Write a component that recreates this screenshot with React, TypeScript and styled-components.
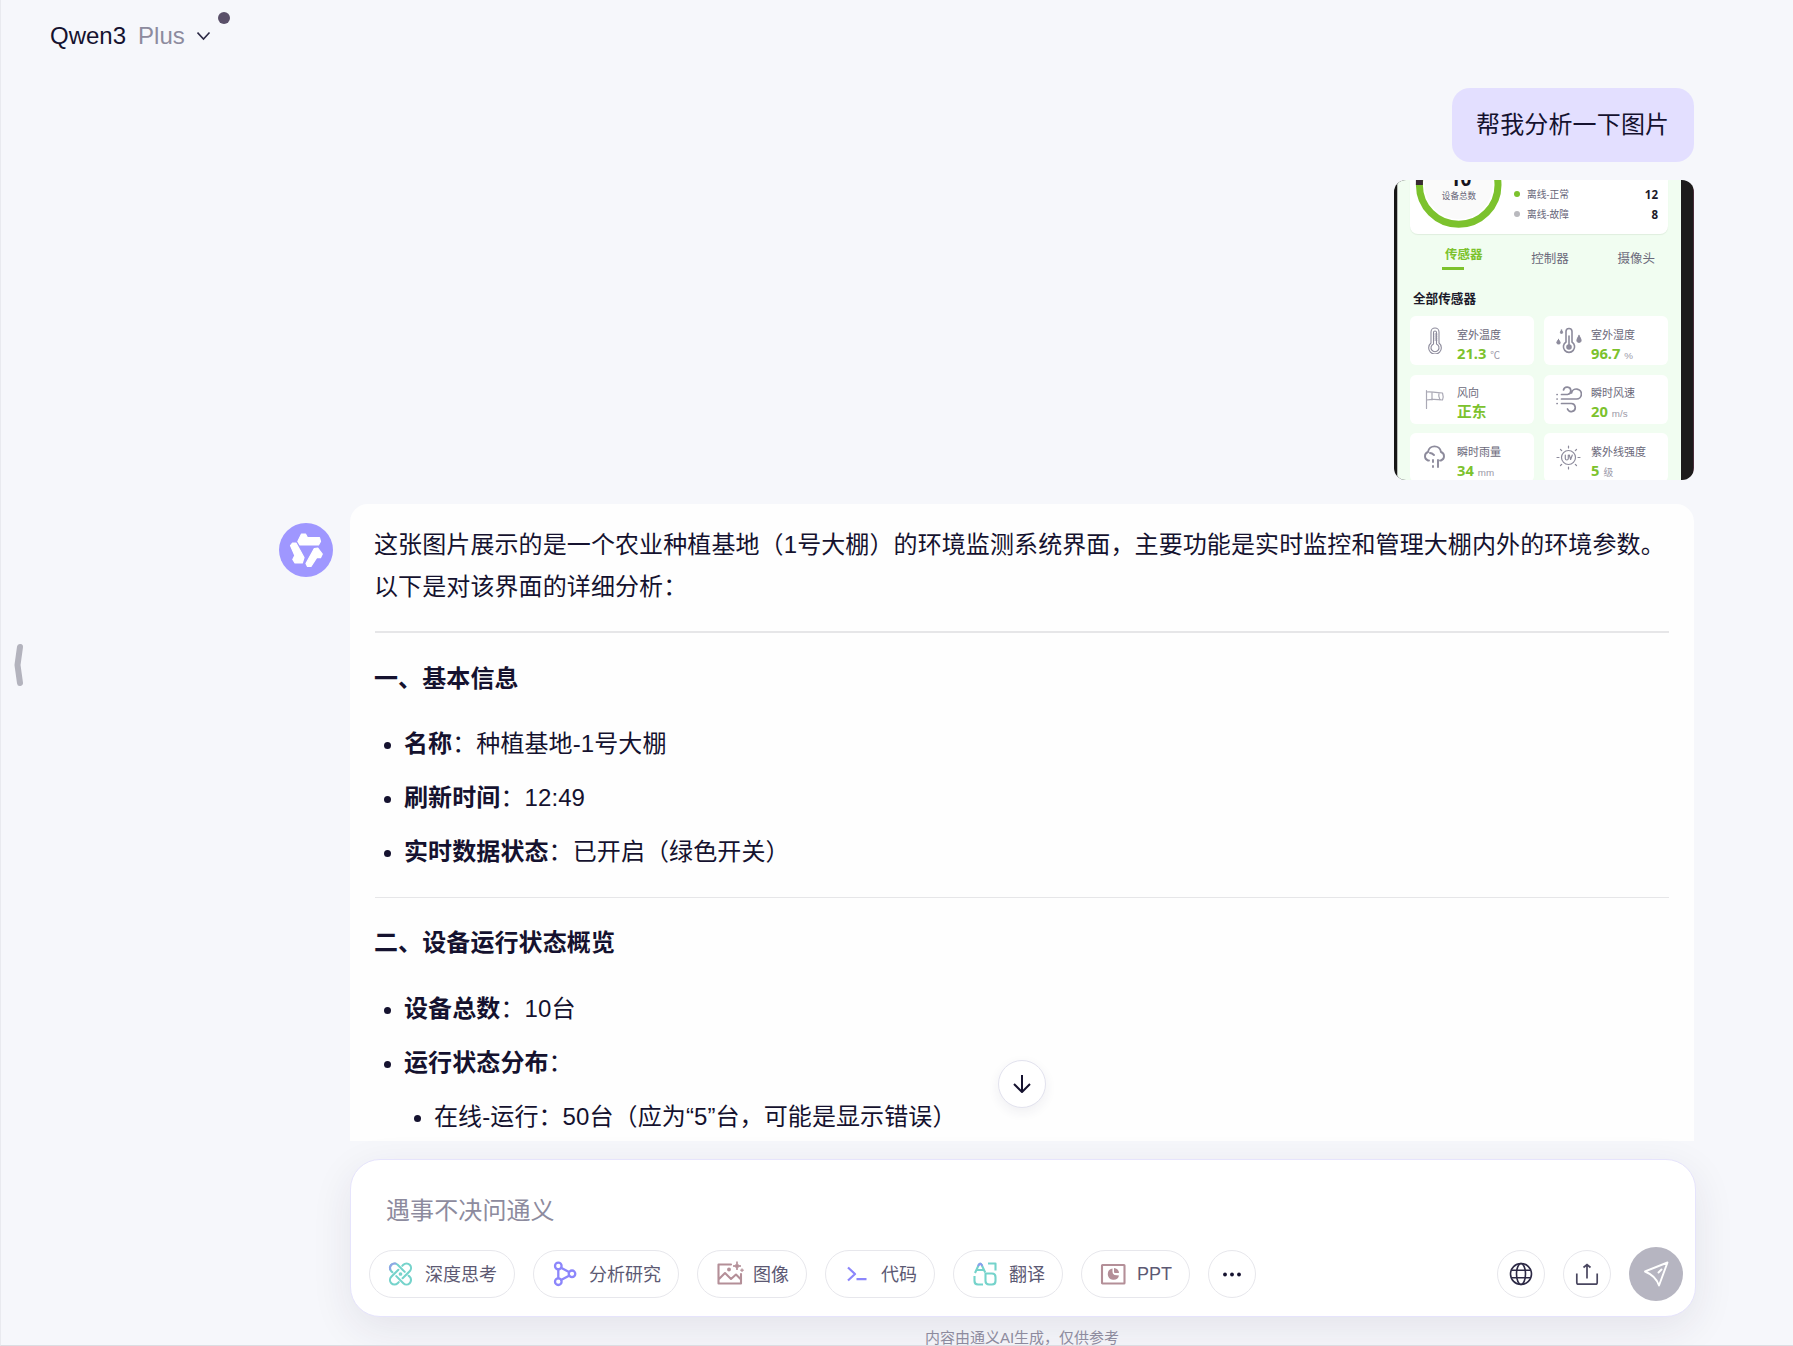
import React from "react";
import styled, { createGlobalStyle } from "styled-components";

const GlobalStyle = createGlobalStyle`
  *, *::before, *::after { box-sizing: border-box; }
  body {
    margin: 0;
    background: #f6f7fb;
    font-family: "Liberation Sans", "Noto Sans CJK SC", sans-serif;
    color: #15122f;
  }
`;

const Page = styled.div`
  position: relative;
  display: flex;
  flex-direction: column;
  width: 100%;
  height: 1346px;
  overflow: hidden;
  border-left: 1px solid #e9eaef;
  border-bottom: 1px solid #dcdde2;
`;

const Header = styled.header`
  display: flex;
  align-items: center;
  height: 72px;
  flex: none;
  padding-left: 49px;
  font-size: 24px;
`;

const Model = styled.span`
  position: relative;
  display: inline-flex;
  align-items: center;
  gap: 12px;
`;

const Muted = styled.span`
  color: #8d8b9e;
`;

const Dot = styled.i`
  position: absolute;
  right: -19px;
  top: -10px;
  width: 12px;
  height: 12px;
  border-radius: 50%;
  background: #5a5069;
`;

const Thread = styled.main`
  display: flex;
  flex-direction: column;
  height: 1069px;
  flex: none;
  overflow: hidden;
  padding: 16px 99px 0 278px;
`;

const UserTurn = styled.section`
  display: flex;
  flex-direction: column;
  align-items: flex-end;
  gap: 18px;
  margin-bottom: 24px;
`;

const Bubble = styled.div`
  width: 242px;
  height: 74px;
  padding-left: 24px;
  border-radius: 18px;
  background: #e3dfff;
  font-size: 24px;
  line-height: 74px;
  letter-spacing: 0.15px;
  white-space: nowrap;
`;

const Photo = styled.div`
  display: flex;
  width: 300px;
  height: 300px;
  padding: 0 13px 0 3px;
  border-radius: 12px;
  overflow: hidden;
  background: linear-gradient(90deg, #161616 0 50%, #1d1b1b 50% 99.6%, #4a2c3a 99.6%);
`;

const Screen = styled.div`
  flex: 1;
  display: flex;
  flex-direction: column;
  padding: 0 13px 0 12px;
  border-left: 1px solid #b9bdb9;
  background: #f1fdf1;
  border-radius: 5px 0 0 5px;
`;

const Summary = styled.div`
  display: flex;
  height: 54px;
  flex: none;
  border-radius: 0 0 8px 8px;
  background: #fff;
  box-shadow: 0 1px 1px #dfeede;
`;

const Gauge = styled.div`
  position: relative;
  width: 98px;
  flex: none;
  margin-right: 6px;
  svg { display: block; }
`;

const GaugeLabel = styled.div`
  position: absolute;
  inset: -12px 0 auto 0;
  display: flex;
  flex-direction: column;
  align-items: center;
  font-size: 8.6px;
  line-height: 12px;
  color: #666477;
  b {
    font: 700 19px/22px "Noto Sans", sans-serif;
    color: #161420;
    margin-left: 3px;
  }
`;

const Legend = styled.div`
  flex: 1;
  display: flex;
  flex-direction: column;
  padding: 4px 10px 0 0;
`;

const LegendRow = styled.div<{ $dot: string }>`
  display: flex;
  align-items: center;
  height: 20px;
  font-size: 9.7px;
  color: #666477;
  &::before {
    content: "";
    width: 6px;
    height: 6px;
    margin-right: 7px;
    border-radius: 50%;
    background: ${(p) => p.$dot};
  }
  b {
    margin-left: auto;
    font: 700 11.500px "Noto Sans", sans-serif;
    color: #1c1a2a;
  }
`;

const Tabs = styled.div`
  display: flex;
  justify-content: space-between;
  height: 53px;
  flex: none;
  padding: 12px 13px 0 35px;
`;

const Tab = styled.span<{ $active?: boolean }>`
  height: 24px;
  font-size: 12.5px;
  line-height: 18px;
  white-space: nowrap;
  padding-top: ${(p) => (p.$active ? 0 : 3.5)}px;
  font-weight: ${(p) => (p.$active ? 700 : 400)};
  color: ${(p) => (p.$active ? "#7cc22d" : "#6b697a")};
  &::after {
    content: "";
    display: ${(p) => (p.$active ? "block" : "none")};
    width: 22px;
    height: 3px;
    margin: 3px 0 0 -3px;
    background: #7cc22d;
  }
`;

const PhotoTitle = styled.div`
  height: 29px;
  flex: none;
  padding: 3px 0 0 3px;
  font-size: 12.6px;
  line-height: 18px;
  font-weight: 700;
  color: #1c1a2a;
`;

const Grid = styled.div`
  display: grid;
  grid-template-columns: 124px 124px;
  grid-auto-rows: 49px;
  gap: 9.600px 10px;
`;

const Sensor = styled.div`
  display: flex;
  align-items: center;
  gap: 9px;
  padding-left: 11px;
  border-radius: 6px;
  background: #fff;
  > svg { flex: none; }
`;

const Reading = styled.div`
  display: flex;
  flex-direction: column;
  padding-top: 7px;
  font-size: 11px;
  line-height: 17px;
  color: #6b697a;
  white-space: nowrap;
`;

const Value = styled.div`
  display: flex;
  align-items: baseline;
  gap: 4px;
  height: 18px;
  font-size: 9.800px;
  line-height: 18px;
  color: #9b99a8;
  b {
    font: 700 14.700px/18px "Noto Sans", "Noto Sans CJK SC", sans-serif;
    color: #7cc22d;
  }
`;

const BotTurn = styled.section`
  display: flex;
  align-items: flex-start;
  gap: 17px;
  height: 637px;
  flex: none;
`;

const Avatar = styled.div`
  width: 54px;
  height: 54px;
  margin-top: 19px;
  flex: none;
  svg { display: block; }
`;

const Answer = styled.article`
  flex: 1;
  height: 637px;
  padding: 20px 25px 0 24px;
  border-radius: 18px 18px 0 0;
  background: #fefefe;
  font-size: 24px;
  line-height: 42px;
  letter-spacing: 0.1px;
  white-space: nowrap;
`;

const Paragraph = styled.p`
  margin: 0;
`;

const Rule = styled.hr<{ $thick?: boolean }>`
  height: ${(p) => (p.$thick ? 2 : 1)}px;
  margin: ${(p) => (p.$thick ? "23px 0 25px 1px" : "24px 0 24px 1px")};
  border: 0;
  background: #e6e6e8;
`;

const Heading = styled.h3<{ $gap: number }>`
  margin: 0 0 ${(p) => p.$gap}px;
  font-size: 24px;
  font-weight: 700;
`;

const List = styled.ul`
  display: flex;
  flex-direction: column;
  gap: 12px;
  margin: 0;
  padding: 0;
  list-style: none;
`;

const Item = styled.li<{ $level?: number }>`
  display: flex;
  align-items: center;
  height: 42px;
  padding-left: ${(p) => 10 + (p.$level ?? 0) * 30}px;
  &::before {
    content: "";
    width: 7px;
    height: 7px;
    margin: 3px 13px 0 0;
    border-radius: 50%;
    background: #15122f;
  }
`;

const ScrollDown = styled.button`
  position: absolute;
  left: 997px;
  top: 1060px;
  display: grid;
  place-items: center;
  width: 48px;
  height: 48px;
  padding: 0;
  border: 1px solid #e2e2ee;
  border-radius: 50%;
  background: #fff;
  box-shadow: 0 4px 12px rgba(40, 36, 90, 0.07);
`;

const Handle = styled.div`
  position: absolute;
  left: 12px;
  top: 643px;
  svg { display: block; }
`;

const Composer = styled.form`
  display: flex;
  flex-direction: column;
  justify-content: space-between;
  width: 1346px;
  height: 158px;
  flex: none;
  margin: 18px 0 0 349px;
  padding: 30px 12px 15px 18px;
  border: 1px solid #e6e4fc;
  border-radius: 30px;
  background: #fff;
  box-shadow: 0 12px 42px rgba(40, 36, 70, 0.09);
`;

const Placeholder = styled.div`
  height: 42px;
  padding-left: 17px;
  font-size: 24px;
  line-height: 42px;
  letter-spacing: 0.1px;
  color: #8d8b9e;
`;

const Tools = styled.div`
  display: flex;
  align-items: center;
  gap: 18px;
`;

const Chip = styled.button`
  display: flex;
  align-items: center;
  gap: 12px;
  height: 48px;
  padding: 0 17px 0 19px;
  border: 1px solid #e7e7ec;
  border-radius: 24px;
  background: #fff;
  font: 18px "Liberation Sans", "Noto Sans CJK SC", sans-serif;
  color: #5c5973;
  white-space: nowrap;
  svg { flex: none; overflow: visible; }
`;

const ChipLabel = styled.span<{ $lift: number }>`
  padding-bottom: ${(p) => p.$lift}px;
`;

const RoundButton = styled.button<{ $push?: boolean }>`
  display: grid;
  place-items: center;
  width: 48px;
  height: 48px;
  margin-left: ${(p) => (p.$push ? "auto" : "0")};
  padding: 0;
  border: 1px solid #e7e7ec;
  border-radius: 50%;
  background: #fff;
`;

const SendButton = styled(RoundButton)`
  width: 54px;
  height: 54px;
  border: 0;
  background: #b6b5c1;
`;

const Footnote = styled.footer`
  padding-top: 9px;
  padding-left: 250px;
  text-align: center;
  font-size: 15px;
  line-height: 24px;
  color: #8d8b9e;
`;

const gray = { fill: "none", stroke: "#8d8b9c", strokeLinecap: "round", strokeLinejoin: "round" } as const;

const icons = {
  thermometer: (
    <svg width="27" height="27" viewBox="0 0 27 27" {...gray} strokeWidth="1.1">
      <path d="M10 16V5a4 4 0 0 1 8 0v11a6.300 6.300 0 1 1-8 0z" />
      <path d="M12.500 17V5.500a1.500 1.500 0 0 1 3 0V17a4 4 0 1 1-3 0zM14 7h2M14 9h2M14 11h2M14 13h2" />
    </svg>
  ),
  humidity: (
    <svg width="27" height="27" viewBox="0 0 27 27" {...gray} strokeWidth="1.6">
      <path d="M11 15V4.500a3 3 0 0 1 6 0V15a5.600 5.600 0 1 1-6 0z" />
      <path d="M14 9v10" />
      <circle cx="14" cy="20" r="2" fill="#8d8b9c" />
      <path d="M3.500 12.500c3 4 1.500 4.500 0 4.500s-3-1 0-4.500zM6.500 3c2 3 1 3.500 0 3.500s-2-.5 0-3.500zM24 8.500c4 6 1.500 7 0 7s-4-1 0-7z" fill="#8d8b9c" strokeWidth="1" />
    </svg>
  ),
  flag: (
    <svg width="27" height="27" viewBox="0 0 27 27" {...gray} stroke="#aaa9b5" strokeWidth="1.2">
      <path d="M5.500 4.500v18M5.500 6c5-1 7 1 16 1 1 3 1 5 0 7-8-1-10-1-16 0M11 6v8M18 7c-1 3 0 5 1 7" />
    </svg>
  ),
  wind: (
    <svg width="27" height="27" viewBox="0 0 27 27" {...gray} strokeWidth="1.7">
      <path d="M6.500 8.500h6a3.700 3.700 0 1 0-4-4.500M6.500 13H21.500a5 5 0 1 0-5-6M6.500 17.500H16a4 4 0 1 1-3.500 5.500M2 8.500h.2M2 13h.2M2 17.500h.2" />
    </svg>
  ),
  rain: (
    <svg width="27" height="27" viewBox="0 0 27 27" {...gray} strokeWidth="1.9">
      <path d="M8 16.500H7a4.500 4.500 0 0 1 0-8.500C8 .5 19 .5 20 8a4.500 4.500 0 0 1 0 8.500h-1M9 9c2 0 3 1 4 2M12 16v2M12 22v1M17 16v7" />
    </svg>
  ),
  uv: (
    <svg width="27" height="27" viewBox="0 0 27 27" {...gray} strokeWidth="1.2">
      <circle cx="13.500" cy="13.500" r="7" />
      <path d="M13.500 2v2M13.500 23v2M2 13.500h2M23 13.500h2M5.500 5.500l1.200 1.200M20.300 20.300l1.200 1.200M5.500 21.500l1.200-1.200M20.300 6.700l1.200-1.200M10.300 11v3.500a1.500 1.500 0 0 0 3 0V11M14.300 11l1.300 4.500 1.700-4.500" />
    </svg>
  ),
};

const sensors = [
  { icon: icons.thermometer, label: "室外温度", value: "21.3", unit: "℃" },
  { icon: icons.humidity, label: "室外湿度", value: "96.7", unit: "%" },
  { icon: icons.flag, label: "风向", value: "正东", unit: "" },
  { icon: icons.wind, label: "瞬时风速", value: "20", unit: "m/s" },
  { icon: icons.rain, label: "瞬时雨量", value: "34", unit: "mm" },
  { icon: icons.uv, label: "紫外线强度", value: "5", unit: "级" },
];

const stroke = { fill: "none", strokeLinecap: "round", strokeLinejoin: "round", strokeWidth: 2.1 } as const;

const link = "M1.500 -4.500H-8.500A4.500 4.500 0 0 0 -8.500 4.500H-7M-1.500 4.500H8.500A4.500 4.500 0 0 0 8.500 -4.500H7";

const chips = [
  {
    label: "深度思考",
    icon: (
      <svg width="24" height="24" viewBox="0 0 24 24" {...stroke} stroke="#75d3cb">
        <path d={link} transform="translate(11.500 12) rotate(45)" />
        <path d={link} transform="translate(11.500 12) rotate(135)" />
        <path d="M1.100 7.500C.2 4 3 1 6.500 1.500" stroke="#8fa6e6" />
        <circle cx="11.500" cy="12" r=".8" fill="#75d3cb" />
      </svg>
    ),
  },
  {
    label: "分析研究",
    icon: (
      <svg width="24" height="24" viewBox="0 0 24 24" {...stroke} stroke="#8c86fb" strokeWidth="2.300">
        <circle cx="5.300" cy="4" r="3.300" />
        <circle cx="5.300" cy="19.700" r="3.300" />
        <circle cx="19" cy="11.800" r="3.300" />
        <path d="M5.300 7.500v8.700M8.500 6l7.500 4M8.500 17.800l7.500-4" />
      </svg>
    ),
  },
  {
    label: "图像",
    icon: (
      <svg width="24" height="24" viewBox="0 0 24 24" {...stroke} stroke="#b48f98">
        <path d="M14 2.500H1.500v19h22.500V12M2 17l6-6 6 6 5-4.500 5 5" />
        <circle cx="12" cy="7.500" r=".9" fill="#b48f98" />
        <path d="M20 0c.5 3 1 3.500 4 4-3 .5-3.500 1-4 4-.5-3-1-3.500-4-4 3-.5 3.500-1 4-4z" fill="#b48f98" strokeWidth="1" />
        <path d="M25 6.800v2.700M23.700 8.200h2.600" strokeWidth="1.200" />
      </svg>
    ),
  },
  {
    label: "代码",
    icon: (
      <svg width="24" height="24" viewBox="0 0 24 24" {...stroke} strokeLinecap="butt" stroke="#8c86fb" strokeWidth="2.200">
        <path d="M3 5.500 10 12l-7 6.500M11.500 17.200h10" />
      </svg>
    ),
  },
  {
    label: "翻译",
    icon: (
      <svg width="24" height="24" viewBox="0 0 24 24" {...stroke} stroke="#75d3cb">
        <path d="M2 11 5.800 2.700Q7.200 .5 8.600 2.700l3.600 7.800M4 8h7M15 1.500h7.500v7M1.500 14v5q0 3.500 3.500 3.500h5" strokeLinecap="butt" />
        <path d="M12.500 11.500H19q3.500 0 3.500 3.500v4q0 3.500-3.500 3.500h-3q-3.500 0-3.500-3.500z" />
        <path d="M5.500 3.300Q7.200 .4 8.900 3.200" stroke="#8b9bf0" />
      </svg>
    ),
  },
  {
    label: "PPT",
    icon: (
      <svg width="24" height="24" viewBox="0 0 24 24" {...stroke} stroke="#b48f98">
        <rect x="1" y="3" width="22.500" height="18.500" rx=".5" />
        <path d="M11.500 6.500a5.700 5.700 0 1 0 6.500 7l-4.500-.5q-2-1-2-3z" fill="#b48f98" stroke="none" />
        <path d="M13 6a5.500 5.500 0 0 1 5 5h-4q-1 0-1-1z" fill="#b48f98" stroke="none" />
      </svg>
    ),
  },
];

export default function App() {
  return (
    <Page>
      <GlobalStyle />
      <Header>
        <Model>
          Qwen3 <Muted>Plus</Muted>
          <svg width="14" height="10" viewBox="0 0 14 10" fill="none" stroke="#2c2945" strokeWidth="1.600">
            <path d="M.5 1.500 6.500 8l6-6.500" />
          </svg>
          <Dot />
        </Model>
      </Header>

      <Thread>
        <UserTurn>
          <Bubble>帮我分析一下图片</Bubble>
          <Photo>
            <Screen>
              <Summary>
                <Gauge>
                  <svg width="98" height="54" viewBox="0 0 98 54" fill="none" strokeWidth="7">
                    <circle cx="48.700" cy="5" r="34" fill="#fafafa" />
                    <circle cx="48.700" cy="5" r="39.300" stroke="#7cc22d" />
                    <path d="M9.400 5V-4" stroke="#3a2a33" />
                  </svg>
                  <GaugeLabel>
                    <b>10</b>
                    <span>设备总数</span>
                  </GaugeLabel>
                </Gauge>
                <Legend>
                  <LegendRow $dot="#7cc22d">离线-正常<b>12</b></LegendRow>
                  <LegendRow $dot="#b9b9be">离线-故障<b>8</b></LegendRow>
                </Legend>
              </Summary>
              <Tabs>
                <Tab $active>传感器</Tab>
                <Tab>控制器</Tab>
                <Tab>摄像头</Tab>
              </Tabs>
              <PhotoTitle>全部传感器</PhotoTitle>
              <Grid>
                {sensors.map((s) => (
                  <Sensor key={s.label}>
                    {s.icon}
                    <Reading>
                      {s.label}
                      <Value><b>{s.value}</b>{s.unit}</Value>
                    </Reading>
                  </Sensor>
                ))}
              </Grid>
            </Screen>
          </Photo>
        </UserTurn>

        <BotTurn>
          <Avatar>
            <svg width="54" height="54" viewBox="0 0 54 54">
              <circle cx="27" cy="27" r="27" fill="#9f97ff" />
              <g fill="#fff" stroke="#fff" strokeWidth="1.200" strokeLinejoin="round">
                <path d="M18.800 18.500 22.500 11H26.500L28.500 14.700H40.500L41.500 18.500 39.500 22H21z" />
                <path d="M11.500 22.500 13.500 20H17L25 34.500 23.300 40H16L13.800 36.500 15.800 32.500z" />
                <path d="M27 40.500 35.300 25.500 38.800 25 43.300 31 41.500 34.700H37.700L32 43.500H28.500z" />
              </g>
            </svg>
          </Avatar>
          <Answer>
            <Paragraph>
              这张图片展示的是一个农业种植基地（1号大棚）的环境监测系统界面，主要功能是实时监控和管理大棚内外的环境参数。
              <br />
              以下是对该界面的详细分析：
            </Paragraph>
            <Rule $thick />
            <Heading $gap={23}>一、基本信息</Heading>
            <List>
              <Item><b>名称</b>：种植基地-1号大棚</Item>
              <Item><b>刷新时间</b>：12:49</Item>
              <Item><b>实时数据状态</b>：已开启（绿色开关）</Item>
            </List>
            <Rule />
            <Heading $gap={24}>二、设备运行状态概览</Heading>
            <List>
              <Item><b>设备总数</b>：10台</Item>
              <Item><b>运行状态分布</b>：</Item>
              <Item $level={1}>在线-运行：50台（应为“5”台，可能是显示错误）</Item>
            </List>
          </Answer>
        </BotTurn>
      </Thread>

      <Composer>
        <Placeholder>遇事不决问通义</Placeholder>
        <Tools>
          {chips.map((c) => (
            <Chip key={c.label} type="button">
              {c.icon}
              <ChipLabel $lift={c.label === "PPT" ? 0 : 2}>{c.label}</ChipLabel>
            </Chip>
          ))}
          <RoundButton type="button">
            <svg width="20" height="6" viewBox="0 0 20 6" fill="#15122f">
              <circle cx="3" cy="3.500" r="1.900" />
              <circle cx="10" cy="3.500" r="1.900" />
              <circle cx="17" cy="3.500" r="1.900" />
            </svg>
          </RoundButton>
          <RoundButton type="button" $push>
            <svg width="24" height="24" viewBox="0 0 24 24" fill="none" stroke="#2c2945" strokeWidth="1.600">
              <circle cx="12" cy="12" r="10.500" />
              <ellipse cx="12" cy="12" rx="4.500" ry="10.500" />
              <path d="M2.500 8.200h19M2.500 15.800h19" />
            </svg>
          </RoundButton>
          <RoundButton type="button">
            <svg width="24" height="24" viewBox="0 0 24 24" fill="none" stroke="#49465f" strokeWidth="1.700">
              <path d="M1.800 11.500v9q0 1.700 1.700 1.700h17q1.700 0 1.700-1.700v-9M12 16.500V3M8.500 5.500 12 2.500l3.500 3" />
            </svg>
          </RoundButton>
          <SendButton type="button">
            <svg width="26" height="26" viewBox="0 0 26 26" fill="none" stroke="#fff" strokeWidth="1.900" strokeLinecap="round" strokeLinejoin="round">
              <path d="M2 10.500 24.500 1.500 16 24.500Q13 15 2 10.500zM15.500 11.500l3-3" />
            </svg>
          </SendButton>
        </Tools>
      </Composer>
      <Footnote>内容由通义AI生成，仅供参考</Footnote>

      <ScrollDown>
        <svg width="20" height="22" viewBox="0 0 20 22" fill="none" stroke="#15122f" strokeWidth="2" strokeLinejoin="round">
          <path d="M10 2v17M2 11l8 8 8-8" />
        </svg>
      </ScrollDown>
      <Handle>
        <svg width="14" height="44" viewBox="0 0 14 44" fill="none" stroke="#b3b3bd" strokeWidth="6" strokeLinecap="round" strokeLinejoin="round">
          <path d="M7 4 4.500 22l2.500 18" />
        </svg>
      </Handle>
    </Page>
  );
}
